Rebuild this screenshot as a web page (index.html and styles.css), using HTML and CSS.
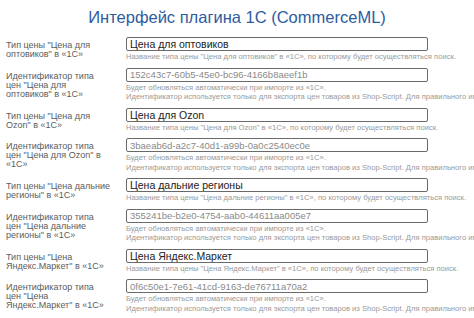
FILE: index.html
```html
<!DOCTYPE html>
<html lang="ru">
<head>
    <meta charset="UTF-8">
    <title>Интерфейс плагина 1С (CommerceML)</title>
    <link rel="stylesheet" href="styles.css">
</head>
<body>
    <h1 class="title">Интерфейс плагина 1С (CommerceML)</h1>

    <div class="form">
        <!-- Оптовики -->
        <div class="row">
            <div class="label">Тип цены "Цена для оптовиков" в «1С»</div>
            <div class="field">
                <input class="input" type="text" value="Цена для оптовиков">
                <div class="hint">Название типа цены "Цена для оптовиков" в «1С», по которому будет осуществляться поиск.</div>
            </div>
        </div>
        <div class="row">
            <div class="label">Идентификатор типа цен "Цена для оптовиков" в «1С»</div>
            <div class="field">
                <input class="input id" type="text" value="152c43c7-60b5-45e0-bc96-4166b8aeef1b" readonly>
                <div class="hint">Будет обновляться автоматически при импорте из «1С».</div>
                <div class="hint">Идентификатор используется только для экспорта цен товаров из Shop-Script. Для правильного импорта</div>
            </div>
        </div>

        <!-- Ozon -->
        <div class="row">
            <div class="label">Тип цены "Цена для Ozon" в «1С»</div>
            <div class="field">
                <input class="input" type="text" value="Цена для Ozon">
                <div class="hint">Название типа цены "Цена для Ozon" в «1С», по которому будет осуществляться поиск.</div>
            </div>
        </div>
        <div class="row">
            <div class="label">Идентификатор типа цен "Цена для Ozon" в «1С»</div>
            <div class="field">
                <input class="input id" type="text" value="3baeab6d-a2c7-40d1-a99b-0a0c2540ec0e" readonly>
                <div class="hint">Будет обновляться автоматически при импорте из «1С».</div>
                <div class="hint">Идентификатор используется только для экспорта цен товаров из Shop-Script. Для правильного импорта</div>
            </div>
        </div>

        <!-- Дальние регионы -->
        <div class="row">
            <div class="label">Тип цены "Цена дальние регионы" в «1С»</div>
            <div class="field">
                <input class="input" type="text" value="Цена дальние регионы">
                <div class="hint">Название типа цены "Цена дальние регионы" в «1С», по которому будет осуществляться поиск.</div>
            </div>
        </div>
        <div class="row">
            <div class="label">Идентификатор типа цен "Цена дальние регионы" в «1С»</div>
            <div class="field">
                <input class="input id" type="text" value="355241be-b2e0-4754-aab0-44611aa005e7" readonly>
                <div class="hint">Будет обновляться автоматически при импорте из «1С».</div>
                <div class="hint">Идентификатор используется только для экспорта цен товаров из Shop-Script. Для правильного импорта</div>
            </div>
        </div>

        <!-- Яндекс.Маркет -->
        <div class="row">
            <div class="label">Тип цены "Цена Яндекс.Маркет" в «1С»</div>
            <div class="field">
                <input class="input" type="text" value="Цена Яндекс.Маркет">
                <div class="hint">Название типа цены "Цена Яндекс.Маркет" в «1С», по которому будет осуществляться поиск.</div>
            </div>
        </div>
        <div class="row">
            <div class="label">Идентификатор типа цен "Цена Яндекс.Маркет" в «1С»</div>
            <div class="field">
                <input class="input id" type="text" value="0f6c50e1-7e61-41cd-9163-de76711a70a2" readonly>
                <div class="hint">Будет обновляться автоматически при импорте из «1С».</div>
                <div class="hint">Идентификатор используется только для экспорта цен товаров из Shop-Script. Для правильного импорта</div>
            </div>
        </div>
    </div>
</body>
</html>
```

FILE: styles.css
```css
body {
    margin: 0;
    padding: 0 0 0 6px;
    font-family: "Liberation Sans", Arial, sans-serif;
    background-color: #fff;
    overflow: hidden;
}
.title {
    margin: 8px 0 11px -6px;
    font-size: 16.5px;
    line-height: 18px;
    font-weight: normal;
    text-align: center;
    color: #2d5c9f;
}
.row {
    display: flex;
    margin-bottom: 6px;
}
.label {
    flex: none;
    width: 105px;
    margin-right: 15px;
    padding-top: 4px;
    font-size: 9px;
    line-height: 9px;
    color: #5c5c5c;
}
/* подсказки длиннее окна, обрезаем по краю */
.field {
    flex: 1;
    min-width: 0;
    overflow: hidden;
}
.input {
    display: block;
    box-sizing: border-box;
    width: 302px;
    height: 14px;
    margin: 0;
    padding: 0 3px;
    border: 1px solid #6a6a6a;
    border-radius: 2px;
    font-family: "Liberation Sans", Arial, sans-serif;
    font-size: 10.5px;
    color: #222;
    outline: none;
}
/* идентификаторы заполняются автоматически */
.input.id {
    font-size: 9.5px;
    color: #8a8a8a;
}
.hint {
    margin-top: 1px;
    font-size: 7.6px;
    line-height: 9.5px;
    color: #9a9a9a;
    white-space: nowrap;
}
.hint + .hint {
    margin-top: 0;
}
```
